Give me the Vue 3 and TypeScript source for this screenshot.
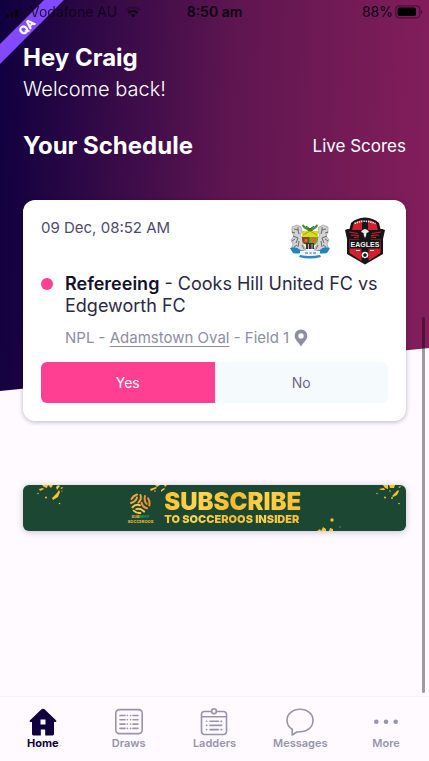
<script setup lang="ts">
import { ref } from 'vue'

type TabId = 'home' | 'draws' | 'ladders' | 'messages' | 'more'

const tabs: { id: TabId; label: string }[] = [
  { id: 'home', label: 'Home' },
  { id: 'draws', label: 'Draws' },
  { id: 'ladders', label: 'Ladders' },
  { id: 'messages', label: 'Messages' },
  { id: 'more', label: 'More' },
]

const activeTab = ref<TabId>('home')
const available = ref<boolean>(true)
</script>

<template>
  <div class="screen">
    <main class="content">
      <div class="top">
        <div class="ribbon"><span>QA</span></div>

        <div class="status">
          <div class="status-side">
            <svg class="signal" width="16" height="12" viewBox="0 0 16 12" aria-hidden="true">
              <rect x="0" y="8" width="3" height="3.5" rx="0.8" />
              <rect x="4.4" y="6" width="3" height="5.5" rx="0.8" />
              <rect x="8.8" y="3.4" width="3.2" height="8.1" rx="0.8" />
              <rect x="13" y="0.8" width="3" height="10.7" rx="0.8" opacity="0.25" />
            </svg>
            <span class="carrier">Vodafone AU</span>
            <svg width="16" height="12" viewBox="0 0 16 12" fill="none" stroke="#0b0210" aria-hidden="true">
              <path d="M1 4.4A10 10 0 0 1 15 4.4" stroke-width="2" opacity="0.3" />
              <path d="M3.4 6.9A6.6 6.6 0 0 1 12.6 6.9" stroke-width="2.2" />
              <path d="M8 11.6L5.4 9.2A3.8 3.8 0 0 1 10.6 9.2Z" fill="#0b0210" stroke="none" />
            </svg>
          </div>
          <span class="clock">8:50 am</span>
          <div class="status-side status-right">
            <span>88%</span>
            <svg width="28" height="14" viewBox="0 0 28 14" aria-hidden="true">
              <rect x="0.8" y="0.8" width="24" height="12" rx="3.5" fill="none" stroke="#0b0210" stroke-width="1.2" opacity="0.45" />
              <rect x="2.6" y="2.6" width="18.4" height="8.4" rx="1.8" fill="#000" />
              <path d="M26 5v4a2.2 2.2 0 0 0 0-4z" fill="#0b0210" opacity="0.5" />
            </svg>
          </div>
        </div>

        <header class="greeting">
          <h1>Hey Craig</h1>
          <p>Welcome back!</p>
        </header>

        <div class="section-head">
          <h2>Your Schedule</h2>
          <a href="#live-scores">Live Scores</a>
        </div>

        <article class="card">
          <div class="card-head">
            <time>09 Dec, 08:52 AM</time>
            <div class="crests">
              <svg width="40" height="48" viewBox="0 0 40 48" role="img" aria-label="Cooks Hill United FC">
                <path d="M13 7q3 4 7 4t7-4l1 2q-3 4-6 4l2 2h-8l2-2q-3 0-6-4z" fill="#3f8f35" />
                <path d="M16 9l4 3 4-3M18 14h5" fill="none" stroke="#2a5f2a" stroke-width="1" />
                <g fill="#d2d2d2" stroke="#8a8a8a" stroke-width="0.6">
                  <path d="M2 10l5-2 4 2 1 5-2 3 3 4v6l3 4-4 2-5-2-6 1 2-6-2-4 3-4-2-4z" />
                  <path d="M38 10l-5-2-4 2-1 5 2 3-3 4v6l-3 4 4 2 5-2 6 1-2-6 2-4-3-4 2-4z" />
                </g>
                <g fill="none" stroke="#4c4c4c" stroke-width="0.8">
                  <path d="M4 12l4 1 1 4M3 19l5 2-2 5M9 24l-1 6M12 28l2 4M4 30l3-2M8 10v3M2 15l3 1M5 22l-3 2" />
                  <path d="M36 12l-4 1-1 4M37 19l-5 2 2 5M31 24l1 6M28 28l-2 4M36 30l-3-2M32 10v3M38 15l-3 1M35 22l3 2" />
                </g>
                <path d="M12 14h16v9q-2 6-8 8-6-2-8-8z" fill="#dcdc1c" />
                <path d="M20 20h8v3q-1 3-3 5h-5z" fill="#6fa528" />
                <path d="M12 20h8v7h-6q-2-2-2-4z" fill="#7d4b2e" />
                <path d="M13 18l7-4 7 4M20 20v8" fill="none" stroke="#a59c16" stroke-width="1" />
                <path d="M14.500 22h3v3h-3zM22 21h4v4h-4z" fill="#d86938" />
                <path d="M16 26h8v6h-8z" fill="#333" />
                <path d="M18.500 27v5M22 27v5" stroke="#ddd" stroke-width="0.8" />
                <path d="M0 31q7-2 10 2h20q3-4 10-2l-3 5q-6 1-8 0l-5 1H15l-4-1q-4 1-8 0z" fill="#1f83bd" />
                <path d="M10 34q10-2 20 0v4q-10 2-20 0z" fill="#f5f8fa" />
                <path d="M15 36h3M19.500 36h2M23 36h3" stroke="#555" stroke-width="1" />
                <path d="M10 38q10 2 20 0l1 2q-11 3-22 0z" fill="#258bc4" />
              </svg>

              <svg width="40" height="48" viewBox="0 0 40 48" role="img" aria-label="Edgeworth FC">
                <path d="M20 0.500Q29 1 34 6l1.500 6L40 13l-2 9v15L20 47.500 2 37V22L0 13l4.500-1L6 6Q11 1 20 .5z" fill="#15161a" />
                <path d="M8.500 7Q13 3 17 2.700V13H7zM31.500 7Q27 3 23 2.700V13h10zM4.500 22h12v22L4.500 36zM35.500 22h-12v22l12-8z" fill="#d3202c" />
                <path d="M9.500 6.500q10-4.500 21 0" fill="none" stroke="#eee" stroke-width="1.600" stroke-dasharray="1.400 0.900" />
                <path d="M1.500 12q7 1 15 2l3.500-2 3.500 2q8-1 15-2l-2 6-4 1-2 3-4-1-2 4-4.500-1L15.500 25l-2-4-4 1-2-3-4-1z" fill="#15161a" />
                <g fill="none" stroke="#d3202c" stroke-width="1">
                  <path d="M4 15l9 1.500M6 18l8 .5M9 20.500l5-.5M36 15l-9 1.500M34 18l-8 .5M31 20.500l-5-.5" />
                </g>
                <path d="M17 13.500q3-3 6 0l1 1.500-2.500 1-.5 3-1 2-1-2-.5-3-2.500-1z" fill="#ececec" />
                <rect x="5" y="22.500" width="30" height="9" fill="#15161a" />
                <text x="20" y="30" class="crest-text">EAGLES</text>
                <path d="M11 33.500h4M25 33.500h4" stroke="#eee" stroke-width="1.200" />
                <circle cx="20" cy="38" r="3.300" fill="#fff" />
                <path d="M20 36.300l1.700 1.200-.6 1.900h-2.200l-.6-1.900zM17 36.400l1-1M23 36.400l-1-1M18 41l.5-1M22 41l-.5-1" fill="#15161a" stroke="#15161a" stroke-width="0.500" />
              </svg>
            </div>
          </div>

          <div class="match">
            <span class="dot"></span>
            <div>
              <h3><b>Refereeing</b> - Cooks Hill United FC vs Edgeworth FC</h3>
              <p class="venue">
                <span>NPL - <a href="#venue">Adamstown Oval</a> - Field 1</span>
                <svg width="14" height="18" viewBox="0 0 14 18" aria-hidden="true">
                  <path fill-rule="evenodd" d="M7 .5a6.400 6.400 0 0 1 6.400 6.400C13.400 10.500 9.500 13 7 17.500 4.500 13 .6 10.500.6 6.900A6.400 6.400 0 0 1 7 .5zm0 3.700a2.700 2.700 0 1 0 0 5.400 2.700 2.700 0 0 0 0-5.400z" fill="#8e8da6" />
                </svg>
              </p>
            </div>
          </div>

          <div class="answers">
            <button type="button" :class="{ chosen: available }" @click="available = true">Yes</button>
            <button type="button" :class="{ chosen: !available }" @click="available = false">No</button>
          </div>
        </article>
      </div>

      <a class="banner" href="#subscribe">
        <svg class="splash splash-left" width="30" height="22" viewBox="0 0 30 22" aria-hidden="true">
          <g fill="#f9c22e">
            <path d="M2 4l4-1 1 1-4 2zM5 0l6 0-1 3-3-1zM11 0h5l-2 3zM19 2l2-2 2 1-3 4zM20 8l2-3 1 2-2 5-5 3-1-2zM23 3l3-1-1 2z" />
            <circle cx="1" cy="8.500" r="0.700" /><circle cx="9" cy="12.500" r="1" /><circle cx="22.500" cy="18.500" r="0.800" /><circle cx="25" cy="6" r="0.600" />
          </g>
        </svg>
        <svg class="splash splash-mid" width="20" height="10" viewBox="0 0 20 10" aria-hidden="true">
          <path d="M1 4l6-2 1 1-6 3zM6 0h5l-3 2zM12 5l3-2 1 1-4 3zM15 0h3l-2 2z" fill="#f9c22e" />
          <circle cx="6" cy="6" r="0.800" fill="#f9c22e" />
        </svg>
        <svg class="splash splash-low" width="26" height="14" viewBox="0 0 26 14" aria-hidden="true">
          <path d="M1 14l3-2 1 2zM5 14l2-4 3 2v2zM13 14l1-3 3 1v2z" fill="#f9c22e" />
          <circle cx="16" cy="3" r="1.700" fill="#f9c22e" /><circle cx="24" cy="10" r="0.700" fill="#8da337" />
        </svg>
        <svg class="splash splash-right" width="30" height="22" viewBox="0 0 30 22" aria-hidden="true">
          <g fill="#f9c22e">
            <path d="M4 4l5-1 1 2-4 0zM8 0h5l0 4-3-1zM14 0h6l-1 3-4 0zM20 8l3-3 1 1-2 4-4 2-1-1zM23 2l3-1-1 2zM14 5l2 1-1 1z" />
            <circle cx="2" cy="8.500" r="0.700" /><circle cx="10" cy="12.500" r="1" /><circle cx="17" cy="13" r="0.900" /><circle cx="24" cy="18.500" r="0.800" />
          </g>
        </svg>

        <span class="team">
          <svg width="22" height="21" viewBox="0 0 22 21" fill="none" stroke-linecap="round" aria-hidden="true">
            <g stroke-width="2">
              <g stroke="#f9a53c">
                <path d="M9.500 9.500Q13 6.500 11.500 2" />
                <path d="M2.500 6Q4.500 2.500 8 1.500" />
                <path d="M2 10Q7 8.500 8 4.500" />
              </g>
              <g stroke="#f58f35" transform="rotate(120 11 10.500)">
                <path d="M9.500 9.500Q13 6.500 11.500 2" />
                <path d="M2.500 6Q4.500 2.500 8 1.500" />
                <path d="M2 10Q7 8.500 8 4.500" />
              </g>
              <g stroke="#fcc748" transform="rotate(240 11 10.500)">
                <path d="M9.500 9.500Q13 6.500 11.500 2" />
                <path d="M2.500 6Q4.500 2.500 8 1.500" />
                <path d="M2 10Q7 8.500 8 4.500" />
              </g>
            </g>
          </svg>
          <span class="team-sponsor">SUB<i>WAY</i></span>
          <span class="team-name">SOCCEROOS</span>
        </span>
        <span class="pitch">
          <strong>SUBSCRIBE</strong>
          <span>TO SOCCEROOS INSIDER</span>
        </span>
      </a>

      <div class="scroll-thumb"></div>
    </main>

    <nav class="tabs">
      <button
        v-for="tab in tabs"
        :key="tab.id"
        type="button"
        :class="{ active: tab.id === activeTab }"
        @click="activeTab = tab.id"
      >
        <svg v-if="tab.id === 'home'" width="28" height="28" viewBox="0 0 28 28" aria-hidden="true">
          <path fill-rule="evenodd" d="M14 .7q.8 0 1.500.6L27.200 12.400q.8 1.300-.7 1.700H25v12q0 1.400-1.400 1.400H16.200v-6h-4.400v6H4.400Q3 27.500 3 26.100v-12H1.500Q0 13.700.8 12.400L12.500 1.300Q13.200.7 14 .7zM11.500 11.500v5h5v-5z" fill="currentColor" />
        </svg>
        <svg v-else-if="tab.id === 'draws'" width="28" height="28" viewBox="0 0 28 28" fill="none" stroke="currentColor" stroke-width="1.600" stroke-linecap="round" aria-hidden="true">
          <rect x="0.800" y="1.600" width="26.400" height="24" rx="3.500" />
          <path d="M5 7.500h5M5 11.800h5M5 16.100h5M5 20.400h5M18 7.500h5M18 11.800h5M18 16.100h5M18 20.400h5" />
          <path d="M12.300 7.500h.2M12.300 11.800h.2M12.300 16.100h.2M12.300 20.400h.2M15.500 7.500h.2M15.500 11.800h.2M15.500 16.100h.2M15.500 20.400h.2" />
        </svg>
        <svg v-else-if="tab.id === 'ladders'" width="28" height="28" viewBox="0 0 28 28" fill="none" stroke="currentColor" stroke-width="1.600" stroke-linecap="round" aria-hidden="true">
          <path d="M11.500 3.500H4.500A3 3 0 0 0 1.500 6.500v17a3 3 0 0 0 3 3h19a3 3 0 0 0 3-3v-17a3 3 0 0 0-3-3h-7M1.500 8.800h25" />
          <circle cx="14" cy="3.200" r="2.400" />
          <path d="M6.500 13.200h.2M6.500 17.400h.2M6.500 21.600h.2M10 13.200h8.500M21 13.200h.6M10 17.400h11.600M10 21.600h8.500M21 21.600h.6" />
        </svg>
        <svg v-else-if="tab.id === 'messages'" width="28" height="28" viewBox="0 0 28 28" fill="none" stroke="currentColor" stroke-width="1.600" stroke-linejoin="round" aria-hidden="true">
          <path d="M14 1.200c7.300 0 13 4.700 13 11.300S21.300 23.700 14 23.700c-1.100 0-2.200 0-3.200.3L6.200 27V21.200C3 19.200 1 16.100 1 12.500 1 5.900 6.700 1.200 14 1.200z" />
        </svg>
        <svg v-else width="28" height="28" viewBox="0 0 28 28" fill="currentColor" aria-hidden="true">
          <circle cx="4.300" cy="13.800" r="2.300" /><circle cx="14" cy="13.800" r="2.300" /><circle cx="23.700" cy="13.800" r="2.300" />
        </svg>
        <span>{{ tab.label }}</span>
      </button>
    </nav>
  </div>
</template>

<style>
body {
  margin: 0;
  background: #fefaff;
}
</style>

<style scoped>
.screen {
  min-height: 100vh;
  display: flex;
  flex-direction: column;
  font-family: Inter, 'Liberation Sans', sans-serif;
  color: #2b2845;
}

h1,
h2,
h3,
p {
  margin: 0;
}

button {
  font: inherit;
  border: 0;
  padding: 0;
  cursor: pointer;
}

.content {
  position: relative;
  flex: 1;
}

.top {
  position: relative;
  isolation: isolate;
  padding: 0 23px;
}

.top::before {
  content: '';
  position: absolute;
  z-index: -2;
  inset: 0 0 30px;
  background: linear-gradient(92deg, #10003f 0%, #2a0745 18%, #4a104c 40%, #5d1550 52%, #701a55 75%, #831e5b 100%);
  clip-path: polygon(0 0, 100% 0, 100% 89%, 0 100%);
}

.ribbon {
  position: absolute;
  z-index: -1;
  top: 0;
  left: 0;
  width: 66px;
  height: 66px;
  overflow: hidden;
}

.ribbon span {
  position: absolute;
  top: 20px;
  left: -23px;
  width: 100px;
  line-height: 14px;
  text-align: center;
  font-size: 12px;
  font-weight: 800;
  color: #fff;
  background: #8249ff;
  transform: rotate(-45deg);
}

.status {
  display: flex;
  align-items: center;
  height: 24px;
  margin: 0 -23px;
  padding: 0 6px;
  font-size: 14px;
  line-height: 24px;
  color: #0b0210;
}

.status-side {
  flex: 1;
  display: flex;
  align-items: center;
  gap: 8px;
}

.status-right {
  justify-content: flex-end;
  gap: 2px;
}

.signal {
  fill: #0b0210;
}

.carrier {
  opacity: 0.8;
}

.clock {
  font-weight: 600;
}

.greeting {
  padding-top: 18px;
  color: #fff;
}

.greeting h1,
.section-head h2 {
  font-size: 24px;
  line-height: 32px;
  font-weight: 700;
}

.greeting p {
  font-size: 20px;
  line-height: 30px;
  font-weight: 300;
}

.section-head {
  display: flex;
  align-items: center;
  justify-content: space-between;
  padding: 26px 0 38px;
  color: #fff;
}

.section-head a {
  font-size: 17px;
  line-height: 24px;
  color: inherit;
  text-decoration: none;
}

.card {
  padding: 17px 18px 18px;
  border-radius: 12px;
  background: #fff;
  box-shadow: 0 1px 5px rgba(20, 5, 40, 0.28);
}

.card-head {
  display: flex;
  justify-content: space-between;
}

.card-head time {
  font-size: 15px;
  line-height: 22px;
  color: #4e4b6b;
}

.crests {
  display: flex;
  gap: 15px;
  padding-right: 3px;
}

.crest-text {
  font: bold 7px 'Liberation Sans', sans-serif;
  fill: #f4f4f4;
  text-anchor: middle;
}

.match {
  display: flex;
  gap: 12px;
  padding: 8px 0 14px;
}

.dot {
  flex: none;
  width: 12px;
  height: 12px;
  margin-top: 5px;
  border-radius: 50%;
  background: #ff3f91;
}

.match h3 {
  font-size: 18px;
  line-height: 22px;
  font-weight: 400;
}

.match b {
  font-weight: 600;
  color: #14102e;
}

.venue {
  display: flex;
  align-items: center;
  gap: 5px;
  padding-top: 11px;
  font-size: 15px;
  line-height: 20px;
  color: #8e8da6;
}

.venue a {
  color: inherit;
  text-underline-offset: 3px;
}

.answers {
  display: flex;
}

.answers button {
  flex: 1;
  height: 41px;
  font-size: 14px;
  color: #6a6885;
  background: #f5fafd;
}

.answers button:first-child {
  border-radius: 6px 0 0 6px;
}

.answers button:last-child {
  border-radius: 0 6px 6px 0;
}

.answers .chosen {
  color: #fff;
  background: #ff3f91;
}

.banner {
  position: relative;
  display: flex;
  align-items: center;
  justify-content: center;
  gap: 11px;
  height: 46px;
  margin: 64px 23px 24px;
  overflow: hidden;
  border-radius: 6px;
  background: #1b4733;
  box-shadow: 0 1px 6px rgba(40, 20, 60, 0.25);
  text-decoration: none;
}

.splash {
  position: absolute;
  top: 0;
}

.splash-left {
  left: 14px;
}

.splash-mid {
  left: 33%;
}

.splash-low {
  top: auto;
  bottom: 0;
  right: 64px;
}

.splash-right {
  right: 1px;
}

.team {
  display: flex;
  flex-direction: column;
  align-items: center;
  font-size: 4px;
  line-height: 5px;
  font-weight: 800;
  color: #e2b53a;
}

.team-sponsor i {
  color: #1b9a4b;
}

.pitch {
  display: flex;
  flex-direction: column;
  font-weight: 900;
  color: transparent;
  background: linear-gradient(100deg, #f9c02c, #ffd650 25%, #f6b92b 50%, #ffd24a 70%, #f8be2e);
  background-clip: text;
}

.pitch strong {
  font-size: 24px;
  line-height: 22px;
  font-weight: 900;
}

.pitch span {
  font-size: 11px;
  line-height: 12px;
}

.scroll-thumb {
  position: absolute;
  right: 4px;
  bottom: 4px;
  width: 3px;
  height: 54%;
  border-radius: 2px;
  background: rgba(0, 0, 0, 0.38);
}

.tabs {
  position: sticky;
  bottom: 0;
  display: flex;
  height: 64px;
  background: #fefaff;
  box-shadow: 0 -1px 1px rgba(60, 30, 80, 0.03);
}

.tabs button {
  flex: 1;
  display: flex;
  flex-direction: column;
  align-items: center;
  padding-top: 11px;
  background: none;
  font-size: 11px;
  line-height: 14px;
  font-weight: 600;
  color: #9695ad;
}

.tabs .active {
  font-weight: 700;
  color: #10003f;
}
</style>
